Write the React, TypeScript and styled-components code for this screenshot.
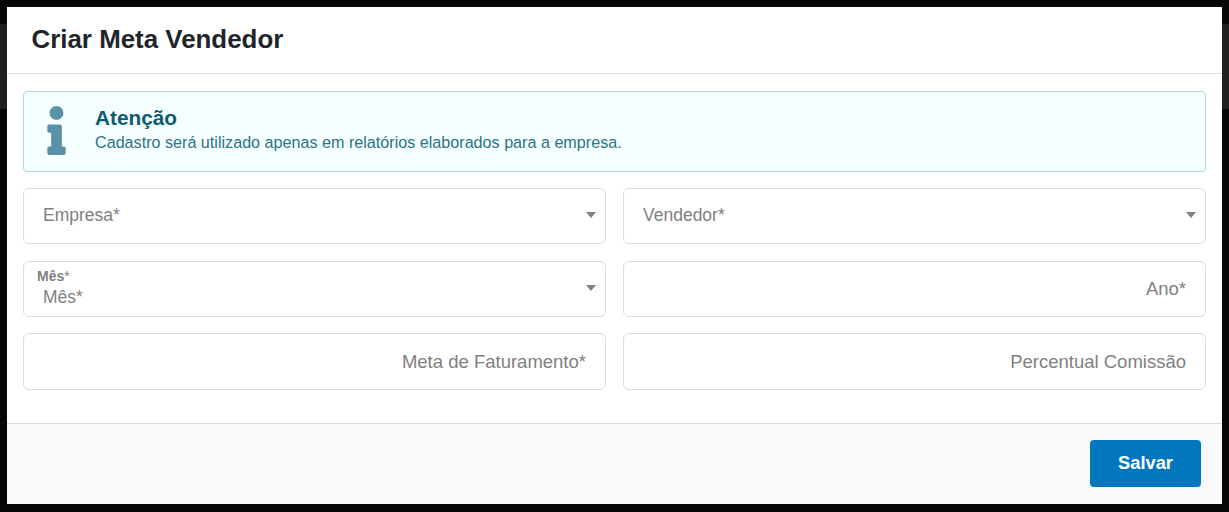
import React from "react";
import styled, { createGlobalStyle } from "styled-components";
import { FaInfo } from "react-icons/fa";

const GlobalStyle = createGlobalStyle`
  html, body {
    margin: 0;
    padding: 0;
    height: 512px;
    overflow: hidden;
    background: #060606;
    font-family: "Liberation Sans", Arial, sans-serif;
  }
  * { box-sizing: border-box; }
`;

const Backdrop = styled.div`
  position: relative;
  height: 512px;
  padding: 7px;
  background: #060606;
`;

const PageBand = styled.div`
  position: absolute;
  left: 0;
  right: 0;
  top: 24px;
  height: 85px;
  background: #1f1f1f;
`;

const Modal = styled.div`
  position: relative;
  display: flex;
  flex-direction: column;
  height: 497px;
  background: #fff;
`;

const Header = styled.div`
  display: flex;
  align-items: center;
  height: 67px;
  padding: 0 24.5px 2px;
  border-bottom: 1px solid #dee2e6;
`;

const Title = styled.h2`
  margin: 0;
  font-size: 25.9px;
  font-weight: 700;
  color: #212529;
`;

const Body = styled.div`
  flex: 1;
  display: flex;
  flex-direction: column;
  padding: 17px 16px 0;
`;

const Alert = styled.div`
  display: flex;
  align-items: center;
  height: 81px;
  padding: 0 0 2px 23px;
  border: 1px solid #b0d7df;
  border-radius: 4px;
  background: #f5ffff;
  margin-bottom: 16px;
`;

const AlertIcon = styled(FaInfo)`
  width: 19px;
  height: 49px;
  color: #5a91a6;
  margin-right: 29px;
`;

const AlertText = styled.div`
  display: flex;
  flex-direction: column;
  margin-bottom: 4px;
`;

const AlertTitle = styled.div`
  font-size: 20.8px;
  font-weight: 700;
  line-height: 24px;
  margin-bottom: 2px;
  color: #0e5a6f;
`;

const AlertMessage = styled.div`
  font-size: 16.15px;
  line-height: 20px;
  color: #2b7285;
`;

const FormGrid = styled.div`
  display: grid;
  grid-template-columns: 583px 583px;
  grid-template-rows: 56px 56px 57px;
  column-gap: 17px;
  row-gap: 16.5px;
`;

const Field = styled.div`
  position: relative;
  height: 100%;
`;

const FieldLabel = styled.label`
  position: absolute;
  left: 14px;
  top: 7px;
  font-size: 14px;
  line-height: 16px;
  font-weight: 700;
  color: #808080;

  span {
    font-weight: 400;
  }
`;

const Select = styled.select<{ $floating?: boolean }>`
  appearance: none;
  width: 100%;
  height: 100%;
  padding: ${(p) => (p.$floating ? "16px 30px 0 19px" : "0 30px 2px 19px")};
  border: 1px solid #dddddd;
  border-radius: 6px;
  background: #fff;
  font-family: inherit;
  font-size: 17.5px;
  color: #808080;
`;

const Caret = styled.div`
  position: absolute;
  right: 10px;
  top: 24px;
  width: 0;
  height: 0;
  border-left: 5px solid transparent;
  border-right: 5px solid transparent;
  border-top: 6px solid #808080;
  pointer-events: none;
`;

const Input = styled.input`
  width: 100%;
  height: 100%;
  padding: 0 19px;
  border: 1px solid #dddddd;
  border-radius: 6px;
  background: #fff;
  font-family: inherit;
  font-size: 18.5px;
  text-align: right;

  &::placeholder {
    color: #808080;
    opacity: 1;
  }
`;

const Footer = styled.div`
  display: flex;
  justify-content: flex-end;
  align-items: flex-start;
  height: 81px;
  padding: 16px 21px 0 0;
  background: #f8f9fb;
  border-top: 1px solid #d9dcdf;
`;

const SaveButton = styled.button`
  width: 111px;
  height: 47px;
  padding: 0 0 2px;
  border: 0;
  border-radius: 4px;
  background: #0277bd;
  color: #fff;
  font-family: inherit;
  font-size: 18.3px;
  font-weight: 700;
`;

const SelectField = ({ name, label }: { name: string; label?: boolean }) => (
  <Field>
    {label && (
      <FieldLabel>
        {name.replace("*", "")}
        <span>*</span>
      </FieldLabel>
    )}
    <Select $floating={label} defaultValue="">
      <option value="">{name}</option>
    </Select>
    <Caret />
  </Field>
);

const App = () => {
  return (
    <>
      <GlobalStyle />
      <Backdrop>
        <PageBand />
        <Modal>
          <Header>
            <Title>Criar Meta Vendedor</Title>
          </Header>
          <Body>
            <Alert>
              <AlertIcon />
              <AlertText>
                <AlertTitle>Atenção</AlertTitle>
                <AlertMessage>
                  Cadastro será utilizado apenas em relatórios elaborados para a empresa.
                </AlertMessage>
              </AlertText>
            </Alert>
            <FormGrid>
              <SelectField name="Empresa*" />
              <SelectField name="Vendedor*" />
              <SelectField name="Mês*" label />
              <Field>
                <Input placeholder="Ano*" />
              </Field>
              <Field>
                <Input placeholder="Meta de Faturamento*" />
              </Field>
              <Field>
                <Input placeholder="Percentual Comissão" />
              </Field>
            </FormGrid>
          </Body>
          <Footer>
            <SaveButton>Salvar</SaveButton>
          </Footer>
        </Modal>
      </Backdrop>
    </>
  );
};

export default App;
